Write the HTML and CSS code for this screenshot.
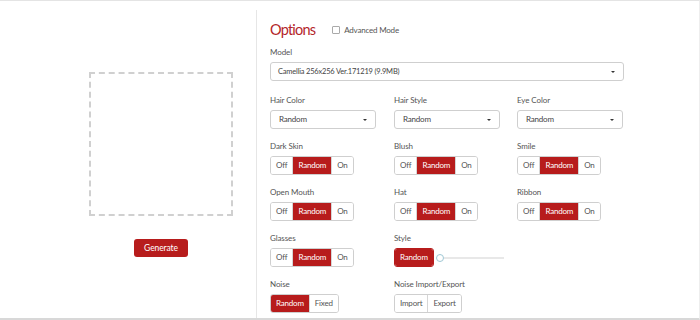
FILE: index.html
```html
<!DOCTYPE html>
<html lang="en">
<head>
  <meta charset="UTF-8">
  <meta name="viewport" content="width=device-width, initial-scale=1.0">
  <title>Options</title>
  <link rel="stylesheet" href="styles.css">
</head>
<body>
  <div class="app">
    <div class="preview">
      <div class="canvas"></div>
      <div class="generate">Generate</div>
    </div>

    <div class="options">
      <div class="header">
        <h1 class="title">Options</h1>
        <label class="check"><span class="box"></span>Advanced Mode</label>
      </div>

      <div class="field model">
        <div class="label">Model</div>
        <div class="select">Camellia 256x256 Ver.171219 (9.9MB)<span class="caret"></span></div>
      </div>

      <div class="grid">
        <div class="field">
          <div class="label">Hair Color</div>
          <div class="select small">Random<span class="caret"></span></div>
        </div>
        <div class="field">
          <div class="label">Hair Style</div>
          <div class="select small">Random<span class="caret"></span></div>
        </div>
        <div class="field">
          <div class="label">Eye Color</div>
          <div class="select small">Random<span class="caret"></span></div>
        </div>

        <div class="field">
          <div class="label">Dark Skin</div>
          <div class="group"><span class="btn">Off</span><span class="btn active">Random</span><span class="btn">On</span></div>
        </div>
        <div class="field">
          <div class="label">Blush</div>
          <div class="group"><span class="btn">Off</span><span class="btn active">Random</span><span class="btn">On</span></div>
        </div>
        <div class="field">
          <div class="label">Smile</div>
          <div class="group"><span class="btn">Off</span><span class="btn active">Random</span><span class="btn">On</span></div>
        </div>

        <div class="field">
          <div class="label">Open Mouth</div>
          <div class="group"><span class="btn">Off</span><span class="btn active">Random</span><span class="btn">On</span></div>
        </div>
        <div class="field">
          <div class="label">Hat</div>
          <div class="group"><span class="btn">Off</span><span class="btn active">Random</span><span class="btn">On</span></div>
        </div>
        <div class="field">
          <div class="label">Ribbon</div>
          <div class="group"><span class="btn">Off</span><span class="btn active">Random</span><span class="btn">On</span></div>
        </div>

        <div class="field">
          <div class="label">Glasses</div>
          <div class="group"><span class="btn">Off</span><span class="btn active">Random</span><span class="btn">On</span></div>
        </div>
        <div class="field">
          <div class="label">Style</div>
          <div class="style-row">
            <div class="group solo"><span class="btn active">Random</span></div>
            <div class="slider"><span class="knob"></span><span class="track"></span></div>
          </div>
        </div>
        <div class="field"></div>

        <div class="field">
          <div class="label">Noise</div>
          <div class="group"><span class="btn active">Random</span><span class="btn">Fixed</span></div>
        </div>
        <div class="field">
          <div class="label">Noise Import/Export</div>
          <div class="group"><span class="btn">Import</span><span class="btn">Export</span></div>
        </div>
      </div>
    </div>
  </div>
</body>
</html>
```

FILE: styles.css
```css
body {
  margin: 0;
  font-family: Lato, "Open Sans", sans-serif;
  background-color: #fff;
  color: #555;
}
.app {
  display: flex;
  height: 320px;
  box-sizing: border-box;
  border-top: 1px solid #e4e4e4;
  border-right: 1px solid #eee;
  border-bottom: 2px solid #d8d8d8;
}
.preview {
  width: 256px;
  padding: 71px 0 0 66px;
  box-sizing: border-box;
  display: flex;
  flex-direction: column;
  align-items: center;
}
.canvas {
  width: 144px;
  height: 144px;
  box-sizing: border-box;
  border: 2px dashed #d0d0d0;
}
.generate {
  margin-top: 23px;
  width: 54px;
  height: 18px;
  line-height: 18px;
  text-align: center;
  font-size: 8.5px;
  letter-spacing: -0.1px;
  color: #fff;
  background-color: #b71c1c;
  border-radius: 3px;
}
.options {
  margin-top: 9px;
  border-left: 1px solid #e6e6e6;
  padding-left: 13px;
  flex: 1;
}
.header {
  display: flex;
  align-items: center;
  height: 20px;
  margin-top: 10px;
}
.title {
  margin: 0;
  font-size: 14.5px;
  line-height: 20px;
  letter-spacing: -0.8px;
  font-weight: normal;
  color: #b3262a;
}
.check {
  display: flex;
  align-items: center;
  margin-left: 17px;
  font-size: 8px;
  letter-spacing: -0.2px;
  color: #555;
}
.box {
  width: 6px;
  height: 6px;
  border: 1px solid #aaa;
  border-radius: 1px;
  margin-right: 4px;
}
.field {
  margin-bottom: 10px;
}
.model {
  margin-top: 5px;
  width: 354px;
  margin-bottom: 12px;
}
.label {
  font-size: 8px;
  line-height: 15px;
  letter-spacing: -0.1px;
  margin-bottom: 2px;
  color: #555;
}
.select {
  position: relative;
  height: 19px;
  line-height: 17px;
  box-sizing: border-box;
  border: 1px solid #cfcfcf;
  border-radius: 3px;
  padding-left: 7px;
  font-size: 7.5px;
  letter-spacing: -0.2px;
  color: #444;
}
.select.small {
  width: 106px;
  padding-left: 8px;
  font-size: 8px;
}
.caret {
  position: absolute;
  right: 8px;
  top: 8px;
  border-left: 2px solid transparent;
  border-right: 2px solid transparent;
  border-top: 2.5px solid #333;
}
.grid {
  display: grid;
  grid-template-columns: 124px 123px 107px;
}
.group {
  display: flex;
  width: max-content;
  height: 19px;
  box-sizing: border-box;
  border: 1px solid #cfcfcf;
  border-radius: 3px;
  overflow: hidden;
}
.btn {
  padding: 0 5px;
  font-size: 8px;
  line-height: 17px;
  letter-spacing: -0.2px;
  color: #555;
  background-color: #fff;
}
.btn + .btn {
  border-left: 1px solid #d6d6d6;
}
.btn.active {
  background-color: #b71c1c;
  color: #fff;
}
.group.solo {
  border-color: #b71c1c;
}
.style-row {
  display: flex;
  align-items: center;
}
.slider {
  display: flex;
  align-items: center;
  margin-left: 2px;
}
.knob {
  width: 6px;
  height: 6px;
  border: 1px solid #9fc7d4;
  border-radius: 50%;
  background-color: #fff;
}
.track {
  width: 60px;
  height: 2px;
  background-color: #e8e8e8;
}
```
